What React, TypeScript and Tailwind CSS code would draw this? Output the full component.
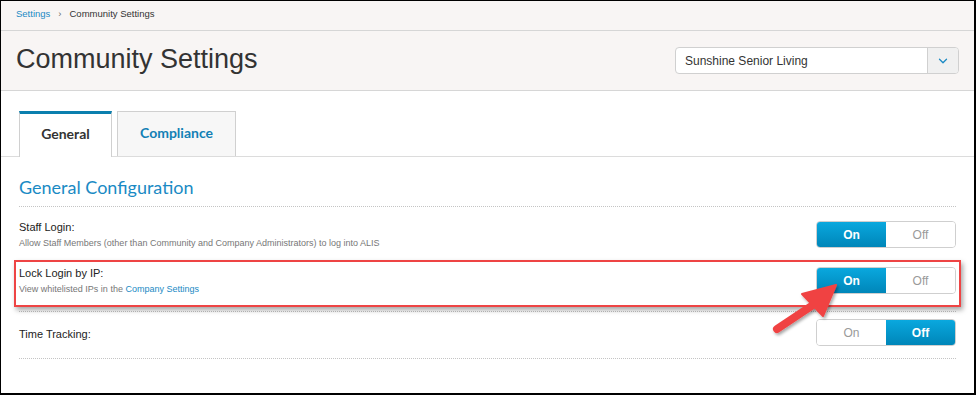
import { ChevronDown } from "lucide-react";

type ToggleProps = { on: boolean };

function Toggle({ on }: ToggleProps) {
  const active = "bg-gradient-to-b from-[#0aa8de] to-[#0086b9] text-white font-bold";
  const idle = "bg-white text-[#9a9a9a]";
  return (
    <div className="flex h-[27px] w-[140px] shrink-0 overflow-hidden rounded-[4px] border border-[#cfcfcf] text-[12px]">
      <div className={`flex flex-1 items-center justify-center ${on ? active : idle}`}>On</div>
      <div className={`flex flex-1 items-center justify-center ${on ? idle : active}`}>Off</div>
    </div>
  );
}

function Row({ label, desc, on }: { label: string; desc?: React.ReactNode; on: boolean }) {
  return (
    <div className={`flex h-[27px] justify-between ${desc ? "items-start" : "items-center"}`}>
      <div className={desc ? "" : "pt-[3px]"}>
        <div className="text-[11px] leading-[13px] text-[#222]">{label}</div>
        {desc && <div className="mt-[4px] text-[9px] leading-[11px] text-[#777]">{desc}</div>}
      </div>
      <Toggle on={on} />
    </div>
  );
}

export default function App() {
  return (
    <div
      className="relative h-[395px] w-[976px] overflow-hidden border-t border-l border-r-2 border-b-2 border-black bg-white"
      style={{ fontFamily: '"Liberation Sans", Arial, sans-serif' }}
    >
      {/* breadcrumb */}
      <div className="flex h-[30px] items-center gap-[8px] border-b border-[#d6d6d6] bg-[#f8f5f4] pb-[2px] pl-[15px] text-[9.5px]">
        <span className="text-[#1a8ac4]">Settings</span>
        <span className="text-[#666]">›</span>
        <span className="text-[#333]">Community Settings</span>
      </div>

      {/* header */}
      <div className="flex h-[60px] items-center justify-between border-b border-[#d6d6d6] bg-[#f8f5f4] pl-[15px] pr-[15px]">
        <h1 className="pb-[2px] text-[27px] leading-none text-[#333]">Community Settings</h1>
        <div className="flex h-[27px] w-[284px] overflow-hidden rounded-[4px] border border-[#d0d0d0] bg-white">
          <div className="flex flex-1 items-center pl-[9px] text-[12px] text-[#333]">Sunshine Senior Living</div>
          <div className="flex w-[31px] items-center justify-center border-l border-[#d0d0d0] bg-[#f0f0f0]">
            <ChevronDown className="h-[14px] w-[14px] text-[#1a8ac4]" strokeWidth={2.2} />
          </div>
        </div>
      </div>

      {/* tabs */}
      <div className="mt-[20px] flex items-end gap-[5px] border-b border-[#dcdcdc] pl-[18px]" style={{ fontFamily: "Lato, sans-serif" }}>
        <div className="-mb-px flex h-[46px] w-[93px] items-start justify-center border-x border-[#d0d0d0] border-t-[3px] border-t-[#0b7fae] bg-white pt-[9px] text-[14px] font-bold text-[#333]">
          General
        </div>
        <div className="flex h-[45px] w-[119px] items-start justify-center border border-b-0 border-[#d0d0d0] bg-[#f7f7f7] pt-[10px] text-[14px] font-bold text-[#1280b5]">
          Compliance
        </div>
      </div>

      {/* section */}
      <div className="px-[18px]">
        <div
          className="border-b border-dotted border-[#c4c4c4] pt-[20px] pb-[9px] text-[18px] leading-[20px] text-[#1a8ac4]"
          style={{ fontFamily: "Lato, sans-serif" }}
        >
          General Configuration
        </div>

        <div className="pt-[14px] pb-[12px]">
          <Row label="Staff Login:" desc="Allow Staff Members (other than Community and Company Administrators) to log into ALIS" on />
        </div>

        <div className="relative -mx-[5px] border-2 border-[#ee4444] px-[3px] pt-[5px] pb-[11px] shadow-[2px_3px_5px_rgba(0,0,0,0.35)]">
          <Row
            label="Lock Login by IP:"
            desc={
              <>
                View whitelisted IPs in the <span className="text-[#1a8ac4]">Company Settings</span>
              </>
            }
            on
          />
        </div>

        <div className="mt-[4px] border-t border-dotted border-[#c4c4c4] pt-[7px] pb-[12px]">
          <Row label="Time Tracking:" on={false} />
        </div>
        <div className="border-t border-dotted border-[#c4c4c4]" />
      </div>

      {/* arrow callout */}
      <svg className="absolute left-[765px] top-[275px]" width="90" height="70" viewBox="0 0 90 70">
        <defs>
          <filter id="sh" x="-20%" y="-20%" width="150%" height="150%">
            <feDropShadow dx="1.5" dy="2" stdDeviation="1.5" floodColor="#000" floodOpacity="0.35" />
          </filter>
        </defs>
        <g filter="url(#sh)" fill="#f04343" stroke="#f04343" strokeLinejoin="round" strokeLinecap="round">
          <line x1="11" y1="53" x2="50" y2="27" strokeWidth="8" />
          <polygon points="70,9 36,18 57,40" strokeWidth="2" />
        </g>
      </svg>
    </div>
  );
}
